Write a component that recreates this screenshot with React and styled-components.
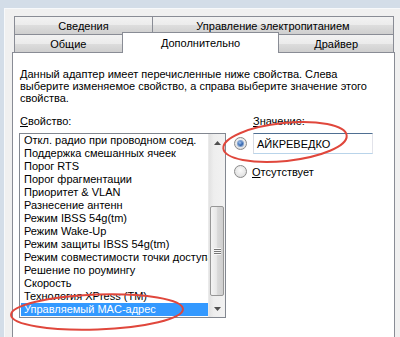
import React from "react";
import styled, { createGlobalStyle } from "styled-components";

const GlobalStyle = createGlobalStyle`
  html, body { margin: 0; padding: 0; }
  body {
    width: 400px; height: 337px; overflow: hidden;
    font-family: "Liberation Sans", Arial, sans-serif;
    font-size: 11px; color: #000;
  }
`;

const Frame = styled.div`
  position: relative;
  width: 400px; height: 337px;
  box-sizing: border-box;
  padding: 8px 0 0 4px;
  background: #d3dde8;
  display: flex;
  overflow: hidden;
`;

const Dialog = styled.div`
  flex: 1;
  background: #f0f0f0;
  border-top: 1px solid #f7f9fb;
  border-left: 1px solid #f7f9fb;
  padding: 7px 0 0 7px;
  display: flex;
  flex-direction: column;
`;

const TabsArea = styled.div`
  width: 383px;
  flex: 1;
  display: flex;
  flex-direction: column;
`;

const TabRow = styled.div`
  display: flex;
  align-items: flex-end;
  height: 18px;
  padding: 0 1px 0 2px;
`;

const Tab = styled.div`
  box-sizing: border-box;
  width: ${(p) => p.$w}px;
  height: ${(p) => (p.$active ? 21 : 18)}px;
  margin-left: ${(p) => (p.$first ? 0 : -1)}px;
  margin-top: ${(p) => (p.$active ? -2 : 0)}px;
  margin-bottom: ${(p) => (p.$active ? -1 : 0)}px;
  z-index: ${(p) => (p.$active ? 2 : 1)};
  border: 1px solid #898c95;
  border-bottom: none;
  background: ${(p) =>
    p.$active
      ? "#ffffff"
      : "linear-gradient(#f2f2f2 0%, #ebebeb 50%, #dddddd 50%, #cfcfcf 100%)"};
  display: flex;
  justify-content: center;
  align-items: ${(p) => (p.$active ? "flex-start" : "center")};
  padding-top: ${(p) => (p.$active ? 3 : 0)}px;
  line-height: 14px;
  white-space: nowrap;
`;

const Panel = styled.div`
  flex: 1;
  background: #fff;
  border: 1px solid #898c95;
  border-bottom: none;
  padding: 15px 0 0 6px;
  display: flex;
  flex-direction: column;
`;

const Description = styled.p`
  margin: 0;
  padding-left: 1px;
  line-height: 12px;
  white-space: nowrap;
`;

const Columns = styled.div`
  display: flex;
  gap: 8px;
  margin-top: 11px;
`;

const Column = styled.div`
  display: flex;
  flex-direction: column;
`;

const Label = styled.div`
  line-height: 13px;
  padding-left: ${(p) => p.$indent || 1}px;
  margin-bottom: 5px;
  white-space: nowrap;
`;

const Key = styled.span`
  text-decoration: underline;
  text-underline-offset: 1px;
`;

const ListBox = styled.div`
  box-sizing: border-box;
  width: 207px;
  height: 185px;
  border: 1px solid #828790;
  display: flex;
  background: #fff;
`;

const Items = styled.div`
  flex: 1;
  min-width: 0;
  overflow: hidden;
  display: flex;
  flex-direction: column;
`;

const Item = styled.div`
  height: 13px;
  line-height: 13px;
  margin-left: 1px;
  padding-left: 3px;
  white-space: nowrap;
  overflow: hidden;
  background: ${(p) => (p.$selected ? "#3399ff" : "transparent")};
  color: ${(p) => (p.$selected ? "#fff" : "#000")};
`;

const ScrollBar = styled.div`
  width: 17px;
  flex-shrink: 0;
  display: flex;
  flex-direction: column;
  background: linear-gradient(to right, #e2e2e2, #eeeeee 30%, #f2f2f2);
  border-left: 1px solid #eaeaea;
  box-sizing: border-box;
`;

const ArrowBtn = styled.div`
  height: 17px;
  display: flex;
  align-items: center;
  justify-content: center;
`;

const Track = styled.div`
  flex: 1;
  display: flex;
  flex-direction: column;
  justify-content: flex-end;
`;

const Thumb = styled.div`
  box-sizing: border-box;
  height: 90px;
  margin: 0 0 4px 1px;
  width: 14px;
  border: 1px solid #979797;
  border-radius: 2px;
  background: linear-gradient(to right, #f4f4f4, #e8e8e8 45%, #d9d9d9 55%, #cfcfcf);
  display: flex;
  align-items: center;
  justify-content: center;
`;

const Grip = styled.div`
  width: 7px;
  height: 7px;
  background: repeating-linear-gradient(
    to bottom,
    #f8f8f8 0px,
    #f8f8f8 1px,
    #777 1px,
    #777 2px
  );
`;

const ValueRow = styled.div`
  display: flex;
  align-items: center;
  gap: ${(p) => p.$gap}px;
  margin-top: ${(p) => p.$mt || 0}px;
  height: ${(p) => p.$h || 13}px;
`;

const Radio = styled.span`
  box-sizing: border-box;
  width: 13px;
  height: 13px;
  border-radius: 50%;
  border: 1px solid #8a8a8a;
  background: radial-gradient(circle at 50% 40%, #fbfbfb 0%, #e6e6e6 60%, #cfcfcf 100%);
  display: flex;
  align-items: center;
  justify-content: center;
  flex-shrink: 0;
`;

const Dot = styled.span`
  width: 5px;
  height: 5px;
  border-radius: 50%;
  background: radial-gradient(circle at 40% 35%, #a8c8f0 0%, #3c6fb8 50%, #173f80 100%);
  box-shadow: 0 0 0 1px #7ea0cf;
`;

const TextInput = styled.div`
  box-sizing: border-box;
  width: 120px;
  height: 21px;
  border-top: 1px solid #4f6f92;
  border-left: 1px solid #d8dbe2;
  border-right: 1px solid #e2e3ea;
  border-bottom: 1px solid #b9d4ea;
  padding-left: 3px;
  display: flex;
  align-items: center;
`;

const Overlay = styled.svg`
  position: absolute;
  left: 0;
  top: 0;
  pointer-events: none;
`;

const items = [
  "Откл. радио при проводном соед.",
  "Поддержка смешанных ячеек",
  "Порог RTS",
  "Порог фрагментации",
  "Приоритет & VLAN",
  "Разнесение антенн",
  "Режим IBSS 54g(tm)",
  "Режим Wake-Up",
  "Режим защиты IBSS 54g(tm)",
  "Режим совместимости точки доступа",
  "Решение по роумингу",
  "Скорость",
  "Технология XPress (TM)",
  "Управляемый MAC-адрес",
];

export default function App() {
  return (
    <>
      <GlobalStyle />
      <Frame>
        <Dialog>
          <TabsArea>
            <TabRow>
              <Tab $w={139} $first>Сведения</Tab>
              <Tab $w={242}>Управление электропитанием</Tab>
            </TabRow>
            <TabRow>
              <Tab $w={109} $first>Общие</Tab>
              <Tab $w={158} $active>Дополнительно</Tab>
              <Tab $w={116}>Драйвер</Tab>
            </TabRow>
            <Panel>
              <Description>
                Данный адаптер имеет перечисленные ниже свойства. Слева
                <br />
                выберите изменяемое свойство, а справа выберите значение этого
                <br />
                свойства.
              </Description>
              <Columns>
                <Column>
                  <Label>
                    <Key>С</Key>войство:
                  </Label>
                  <ListBox>
                    <Items>
                      {items.map((t, i) => (
                        <Item key={t} $selected={i === items.length - 1}>
                          {t}
                        </Item>
                      ))}
                    </Items>
                    <ScrollBar>
                      <ArrowBtn>
                        <svg width="7" height="4" viewBox="0 0 7 4">
                          <path d="M0 4 L3.5 0 L7 4 Z" fill="#505050" />
                        </svg>
                      </ArrowBtn>
                      <Track>
                        <Thumb>
                          <Grip />
                        </Thumb>
                      </Track>
                      <ArrowBtn>
                        <svg width="7" height="4" viewBox="0 0 7 4">
                          <path d="M0 0 L3.5 4 L7 0 Z" fill="#505050" />
                        </svg>
                      </ArrowBtn>
                    </ScrollBar>
                  </ListBox>
                </Column>
                <Column>
                  <Label $indent={19}>
                    <Key>З</Key>начение:
                  </Label>
                  <ValueRow $gap={6} $h={21}>
                    <Radio>
                      <Dot />
                    </Radio>
                    <TextInput>АЙКРЕВЕДКО</TextInput>
                  </ValueRow>
                  <ValueRow $gap={5} $mt={11}>
                    <Radio />
                    <span>
                      <Key>О</Key>тсутствует
                    </span>
                  </ValueRow>
                </Column>
              </Columns>
            </Panel>
          </TabsArea>
        </Dialog>
        <Overlay width="400" height="337" viewBox="0 0 400 337">
          <ellipse
            cx="97"
            cy="312"
            rx="86"
            ry="17.5"
            transform="rotate(-2 97 312)"
            fill="none"
            stroke="#e0473c"
            strokeWidth="2"
          />
          <ellipse
            cx="285"
            cy="142"
            rx="62"
            ry="19"
            transform="rotate(-6 285 142)"
            fill="none"
            stroke="#e0473c"
            strokeWidth="2"
          />
        </Overlay>
      </Frame>
    </>
  );
}
